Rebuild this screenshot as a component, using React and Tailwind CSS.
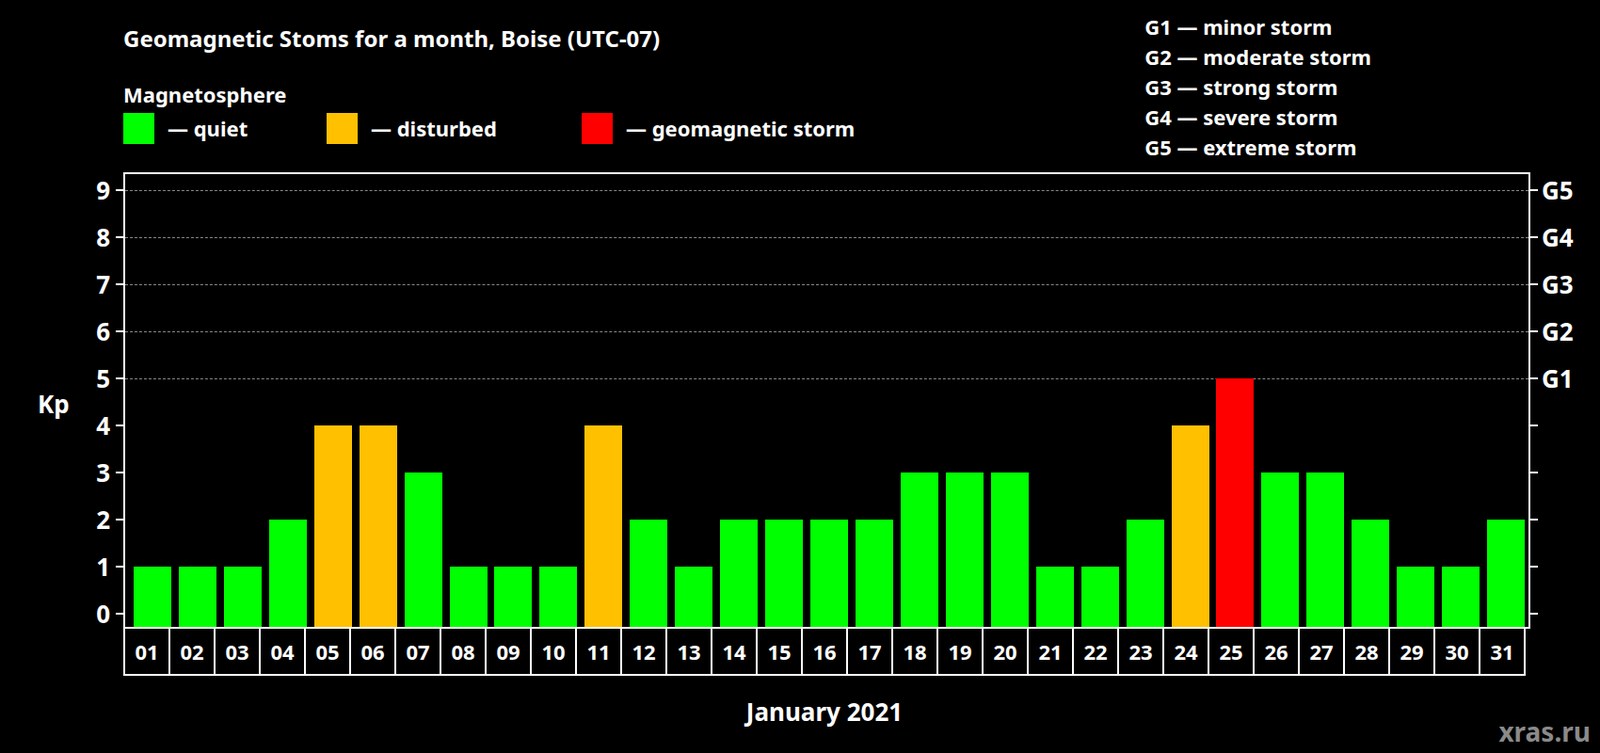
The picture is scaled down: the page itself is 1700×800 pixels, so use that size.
const kp = [1,1,1,2,4,4,3,1,1,1,4,2,1,2,2,2,2,3,3,3,1,1,2,4,5,3,3,2,1,1,2];
const color = (v) => (v >= 5 ? "bg-[#ff0000]" : v === 4 ? "bg-[#ffc000]" : "bg-[#00ff00]");
const gLabels = { 9: "G5", 8: "G4", 7: "G3", 6: "G2", 5: "G1" };

export default function App() {
  return (
    <div className="w-[1700px] h-[800px] bg-black text-white font-['Liberation_Sans',Arial,sans-serif] font-bold relative overflow-hidden">
      <div className="flex justify-between">
        <div className="pl-[131px] pt-[26px]">
          <div className="text-[24px] leading-[30px]">Geomagnetic Stoms for a month, Boise (UTC-07)</div>
          <div className="text-[22px] leading-[28px] mt-[30px]">Magnetosphere</div>
          <div className="flex items-center mt-[6px] text-[22px] h-[33px]">
            <div className="w-[33px] h-[33px] bg-[#00ff00]" />
            <span className="ml-[14px] w-[169px]">— quiet</span>
            <div className="w-[33px] h-[33px] bg-[#ffc000]" />
            <span className="ml-[14px] w-[224px]">— disturbed</span>
            <div className="w-[33px] h-[33px] bg-[#ff0000]" />
            <span className="ml-[14px]">— geomagnetic storm</span>
          </div>
        </div>
        <div className="pt-[12px] pr-[243px] text-[22px] leading-[32px]">
          <div>G1 — minor storm</div>
          <div>G2 — moderate storm</div>
          <div>G3 — strong storm</div>
          <div>G4 — severe storm</div>
          <div>G5 — extreme storm</div>
        </div>
      </div>

      <div className="absolute left-[131px] top-[183px] w-[1495px] h-[485px] border-2 border-white">
        {[0,1,2,3,4,5,6,7,8,9].map((v) => (
          <div key={v} className="absolute left-0 right-0" style={{ bottom: 14 + v * 50 }}>
            {v >= 5 && <div className="absolute left-0 right-0 border-t border-dashed border-[#888]" />}
            <div className="absolute left-[-10px] w-[8px] border-t-2 border-white top-[-1px]" />
            <div className="absolute right-[-10px] w-[8px] border-t-2 border-white top-[-1px]" />
            <div className="absolute right-[calc(100%+16px)] top-[-16px] text-[26px] leading-[32px]">{v}</div>
            {gLabels[v] && (
              <div className="absolute left-[calc(100%+14px)] top-[-16px] text-[26px] leading-[32px]">{gLabels[v]}</div>
            )}
          </div>
        ))}
        <div className="absolute inset-0 flex items-end pl-[5px]">
          {kp.map((v, i) => (
            <div key={i} className="w-[48px] flex justify-center">
              <div className={`w-[40px] ${color(v)}`} style={{ height: 14 + v * 50 }} />
            </div>
          ))}
        </div>
      </div>

      <div className="absolute left-[40px] top-[410px] text-[26px]">Kp</div>

      <div className="absolute left-[131px] top-[668px] flex border-l-2 border-b-2 border-white">
        {kp.map((_, i) => (
          <div key={i} className="w-[48px] h-[48px] border-r-2 border-white flex items-center justify-center text-[22px]">
            {String(i + 1).padStart(2, "0")}
          </div>
        ))}
      </div>

      <div className="absolute left-0 right-0 top-[737px] text-center text-[26px] pl-[52px]">January 2021</div>
      <div className="absolute right-[10px] top-[756px] text-[28px] text-[#8a8a8a]">xras.ru</div>
    </div>
  );
}
